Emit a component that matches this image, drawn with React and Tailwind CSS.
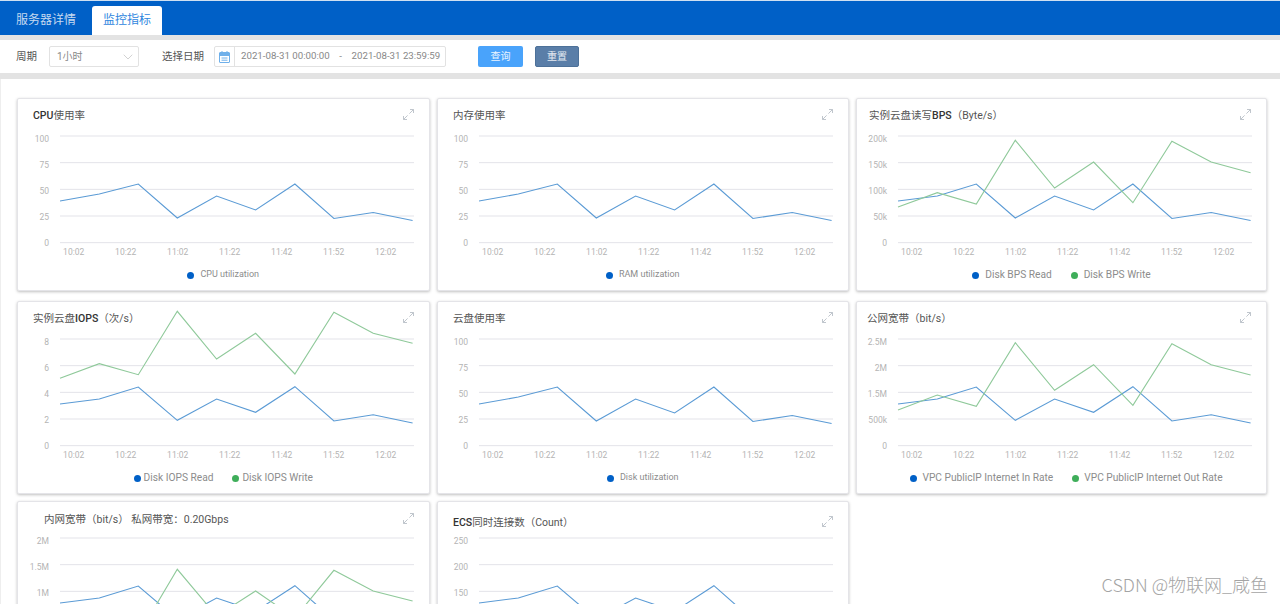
import React from "react";
import { ChevronDown } from "lucide-react";

const FONT = "font-['Roboto','Noto_Sans_CJK_SC',sans-serif]";
const BLUE = "#5b9bd5";
const GREEN = "#8fc99a";

// x positions of the 10 samples, relative to the plot's left edge
const XS = [0, 39.3, 78.3, 117.3, 156.6, 195.6, 234.9, 273.9, 313.2, 352.6];
const TIMES = ["10:02", "10:22", "11:02", "11:22", "11:42", "11:52", "12:02"];

const base = [65, 58, 48, 82, 60, 74, 48, 82.5, 76.5, 84.5];
const diskRead = [65, 60, 48, 82, 60, 74, 48, 82.5, 76.5, 84.5];
const diskWrite = [71, 56.7, 68, 4.3, 52, 26, 66.7, 5.3, 26, 36.7];
const iopsRead = [65, 60, 48, 81.3, 60, 73.3, 47.7, 82, 75.7, 84];
const iopsWrite = [39.3, 24.7, 35.7, -27.7, 20, -5.7, 35, -26.7, -5.7, 4.3];
const vpcWrite = [71, 56, 67.3, 3.7, 51.3, 25.7, 66.3, 4.7, 25.7, 36];
const intraRead = [65, 60, 48, 81.3, 60, 73.3, 47.7, 82, 75.7, 84];
const intraWrite = [120, 110, 97, 31.3, 78, 53, 80, 32.3, 53, 63];

const Strong = ({ children }) => <b className="font-medium text-[#333]">{children}</b>;

const row1 = [
  {
    title: <><Strong>CPU</Strong>使用率</>,
    ticks: ["100", "75", "50", "25", "0"],
    series: [base],
    legend: ["CPU utilization"],
    small: true,
  },
  {
    title: "内存使用率",
    ticks: ["100", "75", "50", "25", "0"],
    series: [base],
    legend: ["RAM utilization"],
    small: true,
    plotLeft: 41,
  },
  {
    title: <>实例云盘读写<Strong>BPS</Strong>（Byte/s）</>,
    ticks: ["200k", "150k", "100k", "50k", "0"],
    series: [diskRead, diskWrite],
    legend: ["Disk BPS Read", "Disk BPS Write"],
    plotLeft: 41,
    titleX: "pl-[12px]",
    dotGap: "gap-[6px]",
  },
];

const row2 = [
  {
    title: <>实例云盘<Strong>IOPS</Strong>（次/s）</>,
    ticks: ["8", "6", "4", "2", "0"],
    series: [iopsRead, iopsWrite],
    legend: ["Disk IOPS Read", "Disk IOPS Write"],
    dotGap: "gap-[3px]",
  },
  {
    title: "云盘使用率",
    ticks: ["100", "75", "50", "25", "0"],
    series: [base],
    legend: ["Disk utilization"],
    small: true,
    plotLeft: 41,
  },
  {
    title: "公网宽带（bit/s）",
    ticks: ["2.5M", "2M", "1.5M", "500k", "0"],
    series: [iopsRead, vpcWrite],
    legend: ["VPC PublicIP Internet In Rate", "VPC PublicIP Internet Out Rate"],
    plotLeft: 41,
    titleX: "pl-[10px]",
    dotGap: "gap-[5px]",
    legendShift: "pl-[10px]",
  },
];

// only the part above the fold is visible on this row
const row3 = [
  {
    title: "内网宽带（bit/s） 私网带宽：0.20Gbps",
    ticks: ["2M", "1.5M", "1M"],
    series: [intraRead, intraWrite],
    titleX: "pl-[26px]",
    titleTop: "pt-[11px]",
    titleH: "h-[36px]",
  },
  {
    title: <><Strong>ECS</Strong>同时连接数（Count）</>,
    ticks: ["250", "200", "150"],
    series: [intraRead],
    plotLeft: 41,
    titleTop: "pt-[14px]",
    titleH: "h-[36px]",
  },
];

// the two little arrows pointing away from each other
const ExpandIcon = () => (
  <svg width="11" height="11" viewBox="0 0 11 11" fill="none" stroke="#b9c0c7" strokeWidth="0.9" className="shrink-0">
    <path d="M6.4 4.6 10.5 0.5M7 0.5h3.5V4M4.6 6.4 0.5 10.5M0.5 7v3.5H4" />
  </svg>
);

const Chart = ({ ticks, series, plotLeft = 42, times = true }) => (
  <svg width="411" height="125" className="block overflow-visible">
    {[0, 26.67, 53.33, 80, 106.67].map((y) => (
      <line key={y} x1={plotLeft} x2={plotLeft + 354} y1={y} y2={y} stroke="#e3e3e9" strokeWidth="1" />
    ))}
    {ticks.map((t, i) => (
      <text key={t} x={plotLeft - 11} y={6 + i * 26} textAnchor="end" fontSize="8.5" fill="#b4b4b4">
        {t}
      </text>
    ))}
    {series.map((s, i) => (
      <polyline
        key={i}
        points={s.map((y, j) => `${plotLeft + XS[j]},${y}`).join(" ")}
        fill="none"
        stroke={i === 0 ? BLUE : GREEN}
        strokeWidth="1.1"
      />
    ))}
    {times && TIMES.map((t, i) => (
      <text key={t} x={plotLeft + 13.7 + i * 52} y={119} textAnchor="middle" fontSize="8.5" fill="#b4b4b4">
        {t}
      </text>
    ))}
  </svg>
);

const Legend = ({ items, small, dotGap = "gap-[6px]", shift = "" }) => (
  <div className={`flex justify-center mt-[7px] gap-[19px] ${shift} ${small ? "text-[9px]" : "text-[10.2px]"} text-[#8c8c8c] h-[14px] items-center`}>
    {items.map((item, i) => (
      <div key={item} className={`flex items-center ${dotGap}`}>
        <span className={`w-[7px] h-[7px] rounded-full ${i === 0 ? "bg-[#0060c7]" : "bg-[#3fae5a]"}`} />
        {item}
      </div>
    ))}
  </div>
);

const Card = ({ title, ticks, series, legend, small, plotLeft, titleX = "pl-[15px]", titleTop = "pt-[10px]", titleH = "h-[37px]", dotGap, legendShift }) => (
  <div className="bg-white border border-[#e4e4e8] rounded-[2px] shadow-[0_1px_3px_rgba(0,0,0,0.25)] pb-[8px]">
    <div className={`flex justify-between pr-[15px] ${titleX} ${titleTop} ${titleH}`}>
      <span className="text-[10.5px] leading-[14px] text-[#555] whitespace-pre">{title}</span>
      <ExpandIcon />
    </div>
    <Chart ticks={ticks} series={series} plotLeft={plotLeft} times={!!legend} />
    {legend && <Legend items={legend} small={small} dotGap={dotGap} shift={legendShift} />}
  </div>
);

const COLS = "grid grid-cols-[412.5px_411.5px_411px] gap-x-[7.5px]";

export default function App() {
  return (
    <div className={`${FONT} relative h-[604px] overflow-hidden bg-white`}>
      {/* tabs */}
      <div className="h-[35px] bg-[#0060c7] border-t border-[#cfe0f2] flex items-end pl-[16px] gap-[16px] text-[12px]">
        <span className="text-[#c5d9f0] h-[29px] leading-[29px] w-[60px]">服务器详情</span>
        <span className="bg-white text-[#2f86de] h-[29px] leading-[29px] w-[70px] text-center rounded-t-[3px]">监控指标</span>
      </div>

      <div className="h-[5px] bg-[#e3e3e3]" />

      {/* filter bar */}
      <div className="h-[33px] flex items-center pl-[16px] text-[10.5px] text-[#555]">
        <span className="w-[33px]">周期</span>
        <div className="w-[90px] h-[21px] border border-[#e2e2e2] rounded-[2px] flex items-center justify-between pl-[7px] pr-[2px] text-[#888] text-[10px]">
          1小时
          <ChevronDown size={16} strokeWidth={0.8} color="#aaa" />
        </div>
        <span className="ml-[23px] w-[52px]">选择日期</span>
        <div className="w-[232px] h-[21px] border border-[#e2e2e2] rounded-[2px] flex items-center text-[#888] text-[9.7px]">
          <div className="w-[20px] h-full border-r border-[#e2e2e2] flex items-center justify-center">
            <svg width="11" height="12" viewBox="0 0 11 12" fill="none" stroke="#6fb0ea" strokeWidth="1">
              <rect x="0.5" y="1.5" width="10" height="10" rx="0.5" />
              <path d="M0.5 3.5h10" strokeWidth="3" />
              <path d="M3 0v2M8 0v2M2.5 7h6M2.5 9.2h6" />
            </svg>
          </div>
          <span className="pl-[6px] whitespace-pre">2021-08-31 00:00:00    -    2021-08-31 23:59:59</span>
        </div>
        <button className="ml-[32px] w-[45px] h-[21px] bg-[#49a3fb] rounded-[2px] text-white/90 text-[10px]">查询</button>
        <button className="ml-[12px] w-[44px] h-[21px] bg-[#5a7ea8] border border-[#4d7199] rounded-[2px] text-white/85 text-[10px]">重置</button>
      </div>

      <div className="h-[6px] bg-[#e3e3e3]" />

      {/* charts */}
      <div className="pl-[16px] pt-[19px] flex flex-col border-l border-[#eeeeee] h-full">
        <div className={COLS}>
          {row1.map((c, i) => <Card key={i} {...c} />)}
        </div>
        <div className={`${COLS} mt-[10px]`}>
          {row2.map((c, i) => <Card key={i} {...c} />)}
        </div>
        <div className={`${COLS} mt-[7px]`}>
          {row3.map((c, i) => <Card key={i} {...c} />)}
        </div>
      </div>

      {/* watermark */}
      <span className="absolute right-[12px] bottom-[6px] text-[18px] font-light text-[#a4a4a4] font-['Noto_Sans_CJK_SC','Roboto',sans-serif]">CSDN @物联网_咸鱼</span>
    </div>
  );
}
